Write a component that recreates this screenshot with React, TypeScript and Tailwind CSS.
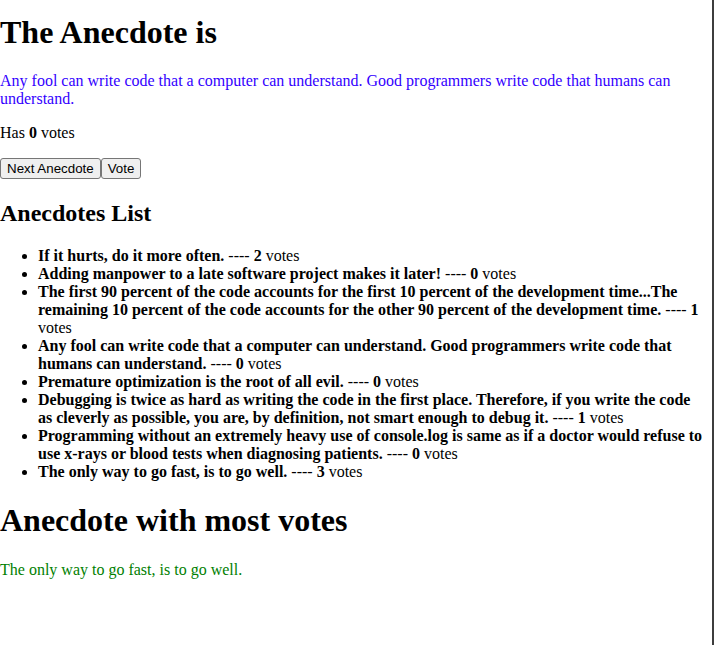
import React from "react";

const anecdotes: { text: string; votes: number }[] = [
  { text: "If it hurts, do it more often.", votes: 2 },
  { text: "Adding manpower to a late software project makes it later!", votes: 0 },
  {
    text: "The first 90 percent of the code accounts for the first 10 percent of the development time...The remaining 10 percent of the code accounts for the other 90 percent of the development time.",
    votes: 1,
  },
  {
    text: "Any fool can write code that a computer can understand. Good programmers write code that humans can understand.",
    votes: 0,
  },
  { text: "Premature optimization is the root of all evil.", votes: 0 },
  {
    text: "Debugging is twice as hard as writing the code in the first place. Therefore, if you write the code as cleverly as possible, you are, by definition, not smart enough to debug it.",
    votes: 1,
  },
  {
    text: "Programming without an extremely heavy use of console.log is same as if a doctor would refuse to use x-rays or blood tests when diagnosing patients.",
    votes: 0,
  },
  { text: "The only way to go fast, is to go well.", votes: 3 },
];

export default function App() {
  return (
    <div className="w-[714px] min-h-[645px] bg-white">
      <div className="w-[714px] min-h-[645px] border-r-2 border-[#3d3d3d] flow-root text-black text-[16px] leading-[18px] [font-family:'Liberation_Serif','Times_New_Roman',serif]">
        <h1 className="mt-[14px] mb-[21.44px] text-[32px] leading-[37px] font-bold">The Anecdote is</h1>
        <p className="my-4 text-[#3300ff]">
          Any fool can write code that a computer can understand. Good programmers write code that humans can understand.
        </p>
        <p className="my-4">
          Has <b>0</b> votes
        </p>
        <div className="flex">
          <button className="h-[21px] px-[6px] bg-[#efefef] border border-[#767676] rounded-[3px] text-[13.333px] leading-[15px] text-black [font-family:'Liberation_Sans',Arial,sans-serif]">
            Next Anecdote
          </button>
          <button className="h-[21px] px-[6px] bg-[#efefef] border border-[#767676] rounded-[3px] text-[13.333px] leading-[15px] text-black [font-family:'Liberation_Sans',Arial,sans-serif]">
            Vote
          </button>
        </div>
        <h2 className="mt-[21px] mb-[19px] text-[24px] leading-[27.6px] font-bold">Anecdotes List</h2>
        <ul className="list-disc pl-[38px] pr-[7px] my-0">
          {anecdotes.map((a, i) => (
            <li key={i}>
              <b>{a.text}</b> ---- <b>{a.votes}</b> votes
            </li>
          ))}
        </ul>
        <h1 className="mt-[21.44px] mb-[21.44px] text-[32px] leading-[37px] font-bold">Anecdote with most votes</h1>
        <p className="my-4 text-[#008000]">The only way to go fast, is to go well.</p>
      </div>
    </div>
  );
}
